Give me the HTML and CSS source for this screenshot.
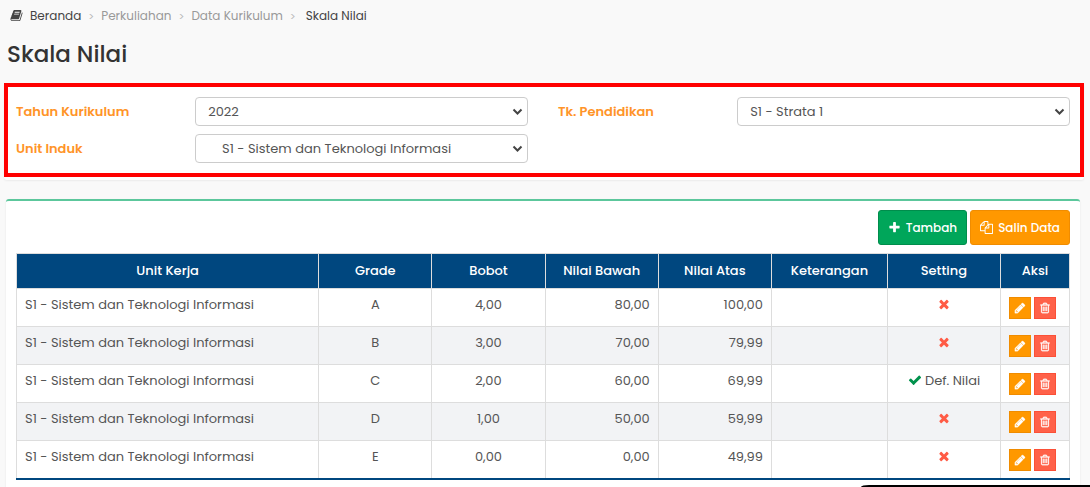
FILE: index.html
```html
<!doctype html>
<html lang="id">
  <head>
    <meta charset="UTF-8" />
    <meta name="viewport" content="width=device-width, initial-scale=1.0" />
    <title>Skala Nilai</title>
    <link rel="stylesheet" href="styles.css">
  </head>
  <body>
    <!-- icon set -->
    <svg class="sprite" aria-hidden="true">
      <symbol id="i-book" viewBox="0 0 1792 1792"><path d="M1703 478q40 57 18 129l-275 906q-19 64-76.5 107.5t-122.5 43.5h-923q-77 0-148.5-53.5t-99.5-131.5q-24-67-2-127 0-4 3-27t4-37q1-8-3-21.5t-3-19.5q2-11 8-21t16.5-23.5 16.5-23.5q23-38 45-91.5t30-91.5q3-10 .5-30t-.5-28q3-11 17-28t17-23q21-36 42-92t25-90q1-9-2.5-32t.5-28q4-13 22-30.5t22-22.5q19-26 42.5-84.5t27.5-96.5q1-8-3-25.5t-2-26.5q2-8 9-18t18-23 17-21q8-12 16.5-30.5t15-35 16-36 19.5-32 26.5-23.5 36-11.5 47.5 5.5l-1 3q38-9 51-9h761q74 0 114 56t18 130l-274 906q-36 119-71.5 153.5t-128.5 34.5h-869q-27 0-38 15-11 16-1 43 24 70 144 70h923q29 0 56-15.5t35-41.5l300-987q7-22 5-57 38 15 59 43zm-1064 2q-4 13 2 22.5t20 9.5h608q13 0 25.5-9.5t16.5-22.5l21-64q4-13-2-22.5t-20-9.5h-608q-13 0-25.5 9.5t-16.5 22.5zm-83 256q-4 13 2 22.5t20 9.5h608q13 0 25.5-9.5t16.5-22.5l21-64q4-13-2-22.5t-20-9.5h-608q-13 0-25.5 9.5t-16.5 22.5z"/></symbol>
      <symbol id="i-plus" viewBox="0 0 1792 1792"><path d="M1600 736v192q0 40-28 68t-68 28h-416v416q0 40-28 68t-68 28h-192q-40 0-68-28t-28-68v-416h-416q-40 0-68-28t-28-68v-192q0-40 28-68t68-28h416v-416q0-40 28-68t68-28h192q40 0 68 28t28 68v416h416q40 0 68 28t28 68z"/></symbol>
      <symbol id="i-copy" viewBox="0 0 1792 1792"><path d="M1696 384q40 0 68 28t28 68v1216q0 40-28 68t-68 28h-960q-40 0-68-28t-28-68v-288h-544q-40 0-68-28t-28-68v-672q0-40 20-88t48-76l408-408q28-28 76-48t88-20h416q40 0 68 28t28 68v328q68-40 128-40h416zm-544 213l-299 299h299v-299zm-640-384l-299 299h299v-299zm196 647l316-316v-416h-384v416q0 40-28 68t-68 28h-416v640h512v-256q0-40 20-88t48-76zm956 804v-1152h-384v416q0 40-28 68t-68 28h-416v640h896z"/></symbol>
      <symbol id="i-times" viewBox="0 0 1792 1792"><path d="M1490 1322q0 40-28 68l-136 136q-28 28-68 28t-68-28l-294-294-294 294q-28 28-68 28t-68-28l-136-136q-28-28-28-68t28-68l294-294-294-294q-28-28-28-68t28-68l136-136q28-28 68-28t68 28l294 294 294-294q28-28 68-28t68 28l136 136q28 28 28 68t-28 68l-294 294 294 294q28 28 28 68z"/></symbol>
      <symbol id="i-check" viewBox="0 0 1792 1792"><path d="M1671 566q0 40-28 68l-724 724-136 136q-28 28-68 28t-68-28l-136-136-362-362q-28-28-28-68t28-68l136-136q28-28 68-28t68 28l294 295 656-657q28-28 68-28t68 28l136 136q28 28 28 68z"/></symbol>
      <symbol id="i-pencil" viewBox="0 0 1792 1792"><path d="M491 1536l91-91-235-235-91 91v107h128v128h107zm523-928q0-22-22-22-10 0-17 7l-542 542q-7 7-7 17 0 22 22 22 10 0 17-7l542-542q7-7 7-17zm-54-192l416 416-832 832h-416v-416zm683 96q0 53-37 90l-166 166-416-416 166-165q36-38 90-38 53 0 91 38l235 234q37 39 37 91z"/></symbol>
      <symbol id="i-trash" viewBox="0 0 1792 1792"><path d="M704 736v576q0 14-9 23t-23 9h-64q-14 0-23-9t-9-23v-576q0-14 9-23t23-9h64q14 0 23 9t9 23zm256 0v576q0 14-9 23t-23 9h-64q-14 0-23-9t-9-23v-576q0-14 9-23t23-9h64q14 0 23 9t9 23zm256 0v576q0 14-9 23t-23 9h-64q-14 0-23-9t-9-23v-576q0-14 9-23t23-9h64q14 0 23 9t9 23zm128 724v-948h-896v948q0 22 7 40.5t14.5 27 10.5 8.5h832q3 0 10.5-8.5t14.5-27 7-40.5zm-672-1076h448l-48-117q-7-9-17-11h-317q-10 2-17 11zm928 32v64q0 14-9 23t-23 9h-96v948q0 83-47 143.5t-113 60.5h-832q-66 0-113-58.5t-47-141.5v-952h-96q-14 0-23-9t-9-23v-64q0-14 9-23t23-9h309l70-167q15-37 54-63t79-26h320q40 0 79 26t54 63l70 167h309q14 0 23 9t9 23z"/></symbol>
    </svg>

    <header class="content-header">
      <nav class="breadcrumb" aria-label="Breadcrumb">
        <a class="home" href="#"><svg class="icon"><use href="#i-book"/></svg>Beranda</a>
        <a href="#">Perkuliahan</a>
        <a href="#">Data Kurikulum</a>
        <span class="current">Skala Nilai</span>
      </nav>
      <h1>Skala Nilai</h1>
    </header>

    <main>
      <div class="filter-wrap">
        <form class="filter">
          <div class="field">
            <label for="tahun">Tahun Kurikulum</label>
            <select id="tahun"><option>2022</option></select>
          </div>
          <div class="field">
            <label for="jenjang">Tk. Pendidikan</label>
            <select id="jenjang"><option>S1 - Strata 1</option></select>
          </div>
          <div class="field">
            <label for="unit">Unit Induk</label>
            <select id="unit"><option>&nbsp;&nbsp;&nbsp;&nbsp;S1 - Sistem dan Teknologi Informasi</option></select>
          </div>
        </form>
      </div>

      <section class="box">
        <div class="toolbar">
          <button type="button" class="btn btn-success"><svg class="icon"><use href="#i-plus"/></svg>Tambah</button>
          <button type="button" class="btn btn-warning"><svg class="icon"><use href="#i-copy"/></svg>Salin Data</button>
        </div>

        <table class="grades">
          <colgroup>
            <col class="col-unit"><col class="col-mid"><col class="col-mid"><col class="col-mid">
            <col class="col-mid"><col class="col-note"><col class="col-mid"><col>
          </colgroup>
          <thead>
            <tr>
              <th>Unit Kerja</th>
              <th>Grade</th>
              <th>Bobot</th>
              <th>Nilai Bawah</th>
              <th>Nilai Atas</th>
              <th>Keterangan</th>
              <th>Setting</th>
              <th>Aksi</th>
            </tr>
          </thead>
          <tbody>
            <tr>
              <td>S1 - Sistem dan Teknologi Informasi</td>
              <td class="center">A</td>
              <td class="center">4,00</td>
              <td class="num">80,00</td>
              <td class="num">100,00</td>
              <td></td>
              <td class="center"><svg class="icon no"><use href="#i-times"/></svg></td>
              <td>
                <div class="actions">
                  <button type="button" class="btn-xs edit" aria-label="Edit"><svg class="icon"><use href="#i-pencil"/></svg></button>
                  <button type="button" class="btn-xs delete" aria-label="Hapus"><svg class="icon"><use href="#i-trash"/></svg></button>
                </div>
              </td>
            </tr>
            <tr>
              <td>S1 - Sistem dan Teknologi Informasi</td>
              <td class="center">B</td>
              <td class="center">3,00</td>
              <td class="num">70,00</td>
              <td class="num">79,99</td>
              <td></td>
              <td class="center"><svg class="icon no"><use href="#i-times"/></svg></td>
              <td>
                <div class="actions">
                  <button type="button" class="btn-xs edit" aria-label="Edit"><svg class="icon"><use href="#i-pencil"/></svg></button>
                  <button type="button" class="btn-xs delete" aria-label="Hapus"><svg class="icon"><use href="#i-trash"/></svg></button>
                </div>
              </td>
            </tr>
            <tr>
              <td>S1 - Sistem dan Teknologi Informasi</td>
              <td class="center">C</td>
              <td class="center">2,00</td>
              <td class="num">60,00</td>
              <td class="num">69,99</td>
              <td></td>
              <td class="center"><svg class="icon yes"><use href="#i-check"/></svg> Def. Nilai</td>
              <td>
                <div class="actions">
                  <button type="button" class="btn-xs edit" aria-label="Edit"><svg class="icon"><use href="#i-pencil"/></svg></button>
                  <button type="button" class="btn-xs delete" aria-label="Hapus"><svg class="icon"><use href="#i-trash"/></svg></button>
                </div>
              </td>
            </tr>
            <tr>
              <td>S1 - Sistem dan Teknologi Informasi</td>
              <td class="center">D</td>
              <td class="center">1,00</td>
              <td class="num">50,00</td>
              <td class="num">59,99</td>
              <td></td>
              <td class="center"><svg class="icon no"><use href="#i-times"/></svg></td>
              <td>
                <div class="actions">
                  <button type="button" class="btn-xs edit" aria-label="Edit"><svg class="icon"><use href="#i-pencil"/></svg></button>
                  <button type="button" class="btn-xs delete" aria-label="Hapus"><svg class="icon"><use href="#i-trash"/></svg></button>
                </div>
              </td>
            </tr>
            <tr>
              <td>S1 - Sistem dan Teknologi Informasi</td>
              <td class="center">E</td>
              <td class="center">0,00</td>
              <td class="num">0,00</td>
              <td class="num">49,99</td>
              <td></td>
              <td class="center"><svg class="icon no"><use href="#i-times"/></svg></td>
              <td>
                <div class="actions">
                  <button type="button" class="btn-xs edit" aria-label="Edit"><svg class="icon"><use href="#i-pencil"/></svg></button>
                  <button type="button" class="btn-xs delete" aria-label="Hapus"><svg class="icon"><use href="#i-trash"/></svg></button>
                </div>
              </td>
            </tr>
          </tbody>
        </table>
      </section>
    </main>

    <div class="dock"></div>
  </body>
</html>
```

FILE: styles.css
```css
* {
  box-sizing: border-box;
}

body {
  margin: 0;
  min-height: 100vh;
  display: flex;
  flex-direction: column;
  background: #f9f9f9;
  color: #555;
  font-family: Poppins, Inter, sans-serif;
  font-size: 13px;
  line-height: 18px;
}

button,
select {
  font: inherit;
}

.sprite {
  display: none;
}

.icon {
  width: 14px;
  height: 14px;
  fill: currentColor;
  vertical-align: -2px;
}

/* header */
.content-header {
  padding: 7px 7px 14px;
}

.breadcrumb {
  display: flex;
  padding-left: 3px;
  font-size: 12px;
}

.breadcrumb a {
  color: #999;
  text-decoration: none;
}

.breadcrumb a::after {
  content: ">";
  padding: 0 7px;
  color: #bbb;
  font-size: 11px;
}

.breadcrumb .home {
  color: #444;
}

.home .icon {
  width: 13px;
  height: 13px;
  margin-right: 7px;
}

.breadcrumb .current {
  padding-left: 3px;
  color: #444;
}

h1 {
  margin: 14px 0 0;
  color: #333;
  font-size: 23px;
  font-weight: 500;
  line-height: 30px;
}

main {
  flex: 1;
  display: flex;
  flex-direction: column;
  gap: 19px;
}

/* filter */
.filter-wrap {
  margin: 0 6px 0 4px;
  padding-bottom: 3px;
  background: #fff;
  border-radius: 3px;
  box-shadow: 0 1px 2px rgba(0, 0, 0, 0.06);
}

.filter {
  display: grid;
  grid-template-columns: 1fr 1fr;
  gap: 8px 30px;
  padding: 10px 10px 10px 8px;
  border: 4px solid #f00;
}

.field {
  display: grid;
  grid-template-columns: 35% 65%;
  align-items: center;
}

.field label {
  color: #ff9428;
  font-weight: 600;
}

.field select {
  height: 29px;
  padding: 0 24px 0 12px;
  border: 1px solid #ccc;
  border-radius: 4px;
  appearance: none;
  background: #fff url("data:image/svg+xml,%3Csvg xmlns='http://www.w3.org/2000/svg' width='11' height='8' viewBox='0 0 11 8'%3E%3Cpath d='M1.5 1.5l4 4 4-4' fill='none' stroke='%23444' stroke-width='2'/%3E%3C/svg%3E") no-repeat right 4px center;
  color: #555;
}

/* table box */
.box {
  flex: 1;
  margin: 0 10px 0 6px;
  padding: 9px 10px 7px;
  background: #fff;
  border-top: 2px solid #5cc79c;
  border-radius: 3px 3px 0 0;
  box-shadow: 0 1px 2px rgba(0, 0, 0, 0.1);
}

.toolbar {
  display: flex;
  justify-content: flex-end;
  gap: 3px;
  margin-bottom: 8px;
}

.btn {
  display: flex;
  align-items: center;
  gap: 5px;
  height: 35px;
  padding: 0 9px;
  border: 1px solid;
  border-radius: 3px;
  color: #fff;
  font-size: 12px;
  font-weight: 500;
}

.btn .icon {
  width: 13px;
  height: 13px;
}

.btn-success {
  background: #00a65a;
  border-color: #008d4c;
}

.btn-warning {
  background: #ff9800;
  border-color: #f08c00;
}

.grades {
  width: 100%;
  border-collapse: collapse;
  table-layout: fixed;
}

.col-unit {
  width: 28.7%;
}

.col-mid {
  width: 10.75%;
}

.col-note {
  width: 11%;
}

.grades th,
.grades td {
  padding: 8px;
  border: 1px solid #ddd;
  vertical-align: top;
}

.grades th {
  background: #00477f;
  color: #fff;
  font-weight: 500;
}

.grades td {
  padding-bottom: 7px;
  line-height: 16px;
}

.grades tbody tr:nth-child(even) {
  background: #f2f3f5;
}

.grades tbody tr:last-child td {
  border-bottom: 2px solid #00477f;
}

.grades .center {
  text-align: center;
}

.grades .num {
  text-align: right;
}

.no {
  color: #ff5b45;
}

.yes {
  color: #00914c;
}

.actions {
  display: flex;
  gap: 3px;
}

.btn-xs {
  display: flex;
  align-items: center;
  justify-content: center;
  width: 22px;
  height: 22px;
  padding: 0;
  border: 1px solid;
  color: #fff;
}

.btn-xs .icon {
  width: 12px;
  height: 12px;
  stroke: currentColor;
  stroke-width: 40;
}

.edit {
  background: #ff9800;
  border-color: #f08c00;
}

.delete {
  background: #ff6149;
  border-color: #fb5037;
}

/* collapsed panel at the bottom edge */
.dock {
  position: fixed;
  right: 0;
  bottom: 0;
  width: 21%;
  height: 2px;
  background: #000;
  border-top-left-radius: 8px 2px;
}
```
